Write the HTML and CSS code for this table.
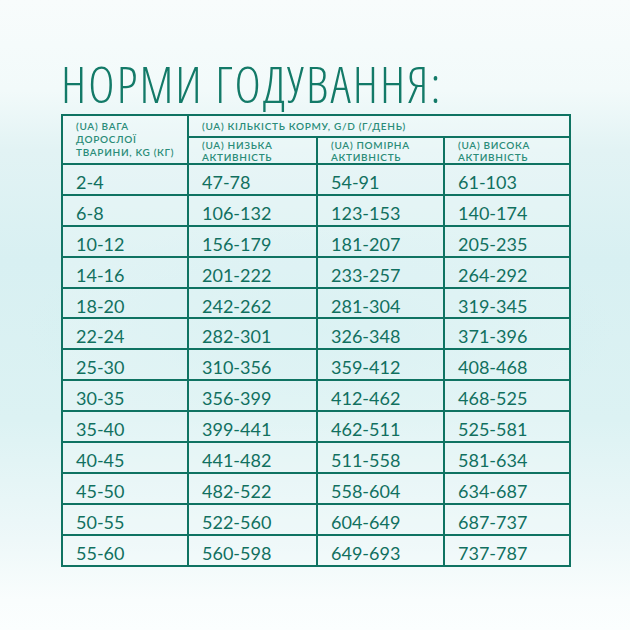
FILE: index.html
```html
<!DOCTYPE html>
<html lang="uk">
<head>
<meta charset="utf-8">
<link rel="stylesheet" href="styles.css">
</head>
<body>
<div class="page">
  <h1 class="title">НОРМИ ГОДУВАННЯ:</h1>
  <table class="feed">
    <colgroup>
      <col class="c1"><col class="c2"><col class="c3"><col class="c4">
    </colgroup>
    <thead>
      <tr class="h1row">
        <th rowspan="2" class="hcell hfirst">(UA) ВАГА<br>ДОРОСЛОЇ<br>ТВАРИНИ, KG (КГ)</th>
        <th colspan="3" class="hcell">(UA) КІЛЬКІСТЬ КОРМУ, G/D (Г/ДЕНЬ)</th>
      </tr>
      <tr class="h2row">
        <th class="hcell">(UA) НИЗЬКА<br>АКТИВНІСТЬ</th>
        <th class="hcell">(UA) ПОМІРНА<br>АКТИВНІСТЬ</th>
        <th class="hcell">(UA) ВИСОКА<br>АКТИВНІСТЬ</th>
      </tr>
    </thead>
    <tbody>
      <tr><td>2-4</td><td>47-78</td><td>54-91</td><td>61-103</td></tr>
      <tr><td>6-8</td><td>106-132</td><td>123-153</td><td>140-174</td></tr>
      <tr><td>10-12</td><td>156-179</td><td>181-207</td><td>205-235</td></tr>
      <tr><td>14-16</td><td>201-222</td><td>233-257</td><td>264-292</td></tr>
      <tr><td>18-20</td><td>242-262</td><td>281-304</td><td>319-345</td></tr>
      <tr><td>22-24</td><td>282-301</td><td>326-348</td><td>371-396</td></tr>
      <tr><td>25-30</td><td>310-356</td><td>359-412</td><td>408-468</td></tr>
      <tr><td>30-35</td><td>356-399</td><td>412-462</td><td>468-525</td></tr>
      <tr><td>35-40</td><td>399-441</td><td>462-511</td><td>525-581</td></tr>
      <tr><td>40-45</td><td>441-482</td><td>511-558</td><td>581-634</td></tr>
      <tr><td>45-50</td><td>482-522</td><td>558-604</td><td>634-687</td></tr>
      <tr><td>50-55</td><td>522-560</td><td>604-649</td><td>687-737</td></tr>
      <tr><td>55-60</td><td>560-598</td><td>649-693</td><td>737-787</td></tr>
    </tbody>
  </table>
</div>
</body>
</html>
```
FILE: styles.css
```css
html, body {
  margin: 0;
  padding: 0;
}
body {
  width: 630px;
  height: 630px;
  overflow: hidden;
  background:
    radial-gradient(ellipse 420px 160px at 320px 330px, rgba(200, 236, 238, 0.55), rgba(200,236,238,0) 70%),
    linear-gradient(180deg, #f8fcfc 0px, #f2fafa 90px, #e2f3f4 150px, #d8f0f2 260px, #dcf2f3 420px, #eef8f9 540px, #f9fdfd 600px, #fbfefe 630px);
}
.page {
  padding: 57px 0 0 61px;
}
.title {
  margin: 0 0 2px 0;
  font-family: "Open Sans", "DejaVu Sans", sans-serif;
  font-weight: 300;
  font-stretch: 75%;
  font-size: 50px;
  line-height: 55px;
  color: #137a68;
  letter-spacing: 2.1px;
}
.feed {
  border-collapse: collapse;
  table-layout: fixed;
  width: 508px;
  border: 2px solid #0f7362;
  font-family: "Lato", "Noto Sans", sans-serif;
  color: #11705f;
}
.c1 { width: 126px; }
.c2 { width: 129px; }
.c3 { width: 127px; }
.c4 { width: 126px; }
.feed th, .feed td {
  border: 2px solid #0f7362;
  padding: 0 0 0 13px;
  text-align: left;
  vertical-align: middle;
}
.feed td {
  height: 30.9px;
  line-height: 20px;
  font-size: 18px;
  font-weight: 400;
  background: rgba(240, 250, 250, 0.35);
  padding-top: 5px;
  padding-bottom: 0;
  box-sizing: border-box;
}
.hcell {
  font-family: "Lato", "Noto Sans", sans-serif;
  font-size: 10px;
  font-weight: 600;
  letter-spacing: 0.7px;
  line-height: 12px;
  color: #2a8c78;
  background: rgba(245, 252, 252, 0.35);
}
.hfirst {
  line-height: 13px;
}
.h1row th { height: 20px; }
.h2row th { height: 22px; padding-top: 1px; }
```
